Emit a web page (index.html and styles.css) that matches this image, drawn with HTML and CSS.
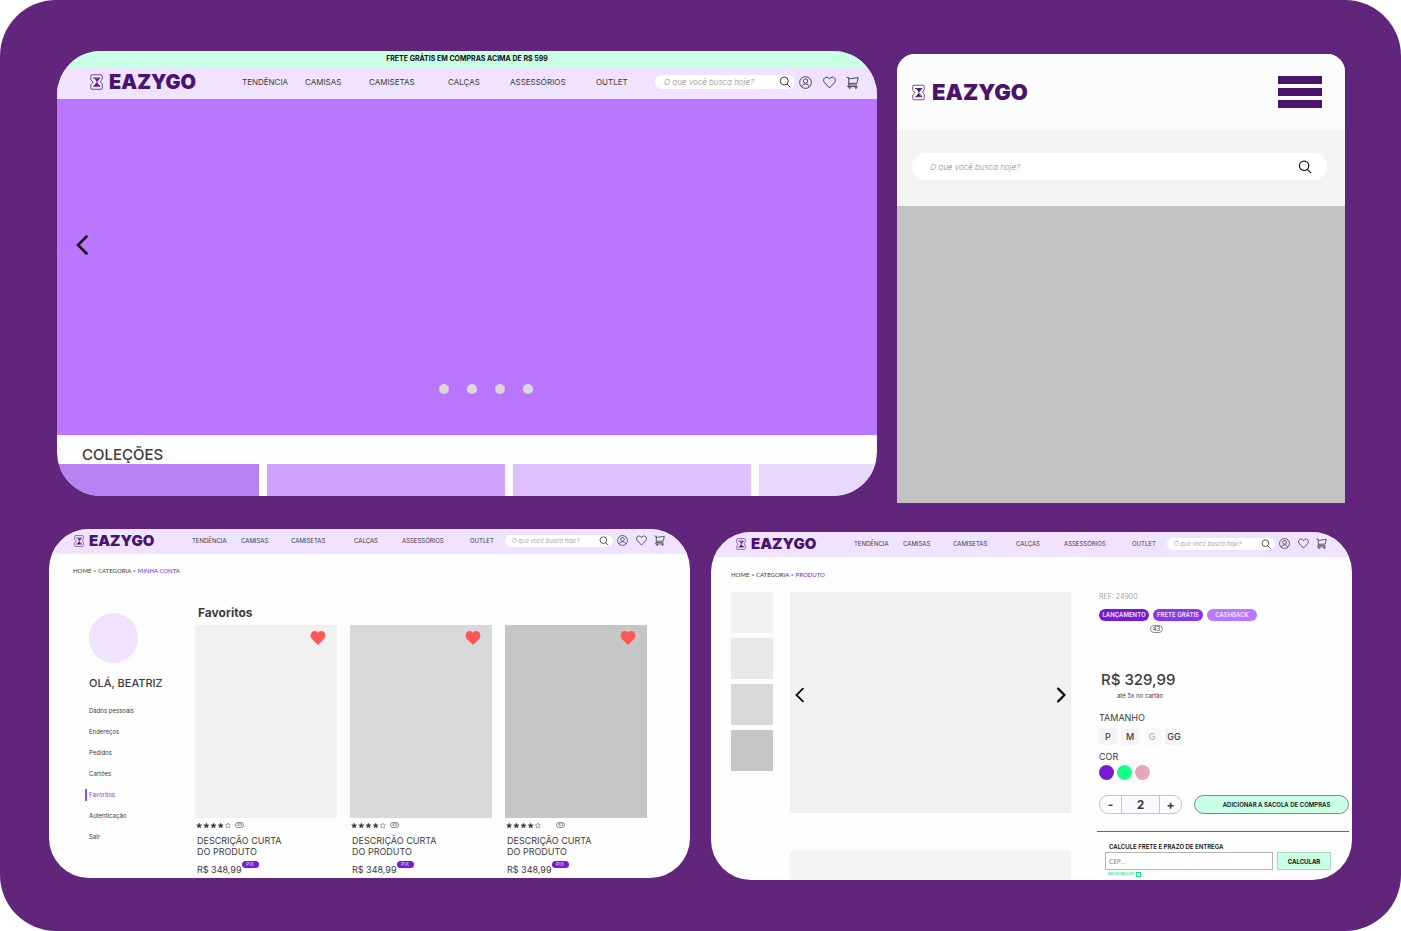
FILE: index.html
```html
<!DOCTYPE html>
<html lang="pt-BR">
<head>
<meta charset="utf-8">
<meta name="viewport" content="width=device-width, initial-scale=1">
<title>EAZYGO</title>
<link rel="stylesheet" href="styles.css">
</head>
<body>
<svg class="sprite" aria-hidden="true">
  <symbol id="mark" viewBox="0 0 26 32">
    <path d="M4 1.500h18a2.500 2.500 0 0 1 2.500 2.500v6L21 15.500l3.500 4.500v8a2.500 2.500 0 0 1-2.500 2.500H4A2.500 2.500 0 0 1 1.500 28v-6.500L6 16 1.500 12V4A2.500 2.500 0 0 1 4 1.500z" fill="none" stroke="currentColor" stroke-width="1.500"/>
    <path d="M6 8h14l-7 8 7 8.500H6" fill="none" stroke="currentColor" stroke-width="1.800"/>
    <path d="M9 9h9l-4.500 6zM12.500 17.500l5.500 6.500H8z" fill="currentColor"/>
  </symbol>
  <symbol id="search" viewBox="0 0 24 24"><circle cx="10.500" cy="10" r="8" fill="none" stroke="currentColor" stroke-width="2"/><path d="M16 16l6.500 6.500" fill="none" stroke="currentColor" stroke-width="2"/></symbol>
  <symbol id="user" viewBox="0 0 24 24"><g fill="none" stroke="currentColor" stroke-width="1.700"><circle cx="12" cy="12" r="10.800"/><circle cx="12" cy="9.500" r="4"/><path d="M5 20c1.500-7 12.500-7 14 0"/></g></symbol>
  <symbol id="heart" viewBox="0 0 24 24"><path d="M12 22L3 12.500C-1.500 7 3 1.500 7.500 2.300 10 2.600 11.500 4.200 12 5.500c.5-1.300 2-2.900 4.500-3.200C21 1.500 25.500 7 21 12.500z" fill="none" stroke="currentColor" stroke-width="1.800"/></symbol>
  <symbol id="heart-full" viewBox="0 0 24 22"><path d="M12 22L2.500 12.500C-1.500 8 .500 0 7 0c2.500 0 4.300 1.300 5 3 .7-1.700 2.500-3 5-3 6.500 0 8.500 8 4.500 12.500z" fill="currentColor"/></symbol>
  <symbol id="cart" viewBox="0 0 24 24"><g fill="none" stroke="currentColor" stroke-width="1.700"><path d="M1 2.500h4v14h15.500M5 5.500L22.500 3 20 13.500H5M5 16.500l-2 3h18"/><circle cx="7" cy="21.500" r="1.500"/><circle cx="18.500" cy="21.500" r="1.500"/></g></symbol>
  <symbol id="prev" viewBox="0 0 12 20"><path d="M10.500 1.500L2 10l8.500 8.500" fill="none" stroke="currentColor" stroke-width="2.500" stroke-linecap="round"/></symbol>
  <symbol id="next" viewBox="0 0 12 20"><path d="M1.500 1.500L10 10l-8.500 8.500" fill="none" stroke="currentColor" stroke-width="3" stroke-linecap="round"/></symbol>
  <symbol id="stars" viewBox="0 0 100 18">
    <g fill="#3c3c3c" stroke="#3c3c3c" stroke-width="1"><path id="st" d="M9 1.500l2.300 5 5.300.6-4 3.600 1.200 5.300L9 13.300 4.200 16l1.200-5.300-4-3.600 5.300-.6z"/><use href="#st" x="20.500"/><use href="#st" x="41"/><use href="#st" x="61.500"/></g>
    <path d="M91 2l2.300 4.500 5 .6-3.700 3.600 1 5L91 13.300 86.400 15.700l1-5-3.700-3.600 5-.6z" fill="none" stroke="#3c3c3c" stroke-width="1.200"/>
  </symbol>
</svg>

<main class="board">
  <div class="row row-top">
    <section class="card home">
      <p class="promo">FRETE GRÁTIS EM COMPRAS ACIMA DE R$ 599</p>
      <header class="bar bar-large">
        <a class="logo" href="#"><svg><use href="#mark"/></svg>EAZYGO</a>
        <a href="#">TENDÊNCIA</a><a href="#">CAMISAS</a><a href="#">CAMISETAS</a><a href="#">CALÇAS</a><a href="#">ASSESSÓRIOS</a><a href="#">OUTLET</a>
        <form class="search"><input type="search" aria-label="Buscar" placeholder="O que você busca hoje?"><button type="button" aria-label="Buscar"><svg><use href="#search"/></svg></button></form>
        <nav class="tools"><a href="#" aria-label="Conta"><svg><use href="#user"/></svg></a><a href="#" aria-label="Favoritos"><svg><use href="#heart"/></svg></a><a href="#" aria-label="Sacola"><svg><use href="#cart"/></svg></a></nav>
      </header>
      <div class="banner">
        <button class="arrow" type="button" aria-label="Anterior"><svg><use href="#prev"/></svg></button>
        <div class="dots"><button type="button" aria-label="Slide 1"></button><button type="button" aria-label="Slide 2"></button><button type="button" aria-label="Slide 3"></button><button type="button" aria-label="Slide 4"></button></div>
      </div>
      <h2 class="collections-title">COLEÇÕES</h2>
      <div class="collections"><div></div><div></div><div></div><div></div></div>
    </section>

    <section class="card mobile">
      <header class="mobile-head">
        <a class="logo" href="#"><svg><use href="#mark"/></svg>EAZYGO</a>
        <button class="menu" type="button" aria-label="Menu"><span></span><span></span><span></span></button>
      </header>
      <div class="mobile-search"><form class="search"><input type="search" aria-label="Buscar" placeholder="O que você busca hoje?"><button type="button" aria-label="Buscar"><svg><use href="#search"/></svg></button></form></div>
      <div class="mobile-hero"></div>
    </section>
  </div>

  <div class="row row-bottom">
    <section class="card account">
      <header class="bar">
        <a class="logo" href="#"><svg><use href="#mark"/></svg>EAZYGO</a>
        <a href="#">TENDÊNCIA</a><a href="#">CAMISAS</a><a href="#">CAMISETAS</a><a href="#">CALÇAS</a><a href="#">ASSESSÓRIOS</a><a href="#">OUTLET</a>
        <form class="search"><input type="search" aria-label="Buscar" placeholder="O que você busca hoje?"><button type="button" aria-label="Buscar"><svg><use href="#search"/></svg></button></form>
        <nav class="tools"><a href="#" aria-label="Conta"><svg><use href="#user"/></svg></a><a href="#" aria-label="Favoritos"><svg><use href="#heart"/></svg></a><a href="#" aria-label="Sacola"><svg><use href="#cart"/></svg></a></nav>
      </header>
      <p class="crumbs">HOME &gt; CATEGORIA &gt; <a href="#">MINHA CONTA</a></p>
      <div class="account-body">
        <aside>
          <div class="avatar"></div>
          <h2 class="hello">OLÁ, BEATRIZ</h2>
          <nav class="side-nav"><a href="#">Dados pessoais</a><a href="#">Endereços</a><a href="#">Pedidos</a><a href="#">Cartões</a><a class="current" href="#">Favoritos</a><a href="#">Autenticação</a><a href="#">Sair</a></nav>
        </aside>
        <div>
          <h1 class="fav-title">Favoritos</h1>
          <div class="fav-grid">
            <article>
              <div class="photo tone-1"><button type="button" aria-label="Remover dos favoritos"><svg><use href="#heart-full"/></svg></button></div>
              <div class="rating"><svg class="stars"><use href="#stars"/></svg><span class="count">43</span></div>
              <h3>DESCRIÇÃO CURTA<br>DO PRODUTO</h3>
              <p class="price">R$ 348,99<span class="pix">PIX</span></p>
            </article>
            <article>
              <div class="photo tone-2"><button type="button" aria-label="Remover dos favoritos"><svg><use href="#heart-full"/></svg></button></div>
              <div class="rating"><svg class="stars"><use href="#stars"/></svg><span class="count">43</span></div>
              <h3>DESCRIÇÃO CURTA<br>DO PRODUTO</h3>
              <p class="price">R$ 348,99<span class="pix">PIX</span></p>
            </article>
            <article>
              <div class="photo tone-3"><button type="button" aria-label="Remover dos favoritos"><svg><use href="#heart-full"/></svg></button></div>
              <div class="rating rating-wide"><svg class="stars"><use href="#stars"/></svg><span class="count">43</span></div>
              <h3>DESCRIÇÃO CURTA<br>DO PRODUTO</h3>
              <p class="price">R$ 348,99<span class="pix">PIX</span></p>
            </article>
          </div>
        </div>
      </div>
    </section>

    <section class="card product">
      <header class="bar">
        <a class="logo" href="#"><svg><use href="#mark"/></svg>EAZYGO</a>
        <a href="#">TENDÊNCIA</a><a href="#">CAMISAS</a><a href="#">CAMISETAS</a><a href="#">CALÇAS</a><a href="#">ASSESSÓRIOS</a><a href="#">OUTLET</a>
        <form class="search"><input type="search" aria-label="Buscar" placeholder="O que você busca hoje?"><button type="button" aria-label="Buscar"><svg><use href="#search"/></svg></button></form>
        <nav class="tools"><a href="#" aria-label="Conta"><svg><use href="#user"/></svg></a><a href="#" aria-label="Favoritos"><svg><use href="#heart"/></svg></a><a href="#" aria-label="Sacola"><svg><use href="#cart"/></svg></a></nav>
      </header>
      <p class="crumbs">HOME &gt; CATEGORIA &gt; <a href="#">PRODUTO</a></p>
      <div class="product-body">
        <div class="thumbs"><div class="tone-1"></div><div class="tone-half"></div><div class="tone-2"></div><div class="tone-3"></div></div>
        <div class="gallery">
          <div class="stage"><button type="button" aria-label="Anterior"><svg><use href="#prev"/></svg></button><button type="button" aria-label="Próxima"><svg><use href="#next"/></svg></button></div>
          <div class="next-block"></div>
        </div>
        <div class="info">
          <p class="ref">REF: 24900</p>
          <div class="tags"><span>LANÇAMENTO</span><span>FRETE GRÁTIS</span><span>CASHBACK</span></div>
          <span class="count">43</span>
          <p class="value">R$ 329,99</p>
          <p class="installments">até 5x no cartão</p>
          <h2 class="label size-label">TAMANHO</h2>
          <div class="sizes"><button type="button">P</button><button type="button">M</button><button type="button" disabled>G</button><button type="button">GG</button></div>
          <h2 class="label color-label">COR</h2>
          <div class="colors"><button class="violet" type="button" aria-label="Roxo"></button><button class="green" type="button" aria-label="Verde"></button><button class="pink" type="button" aria-label="Rosa"></button></div>
          <div class="buy">
            <div class="qty"><button type="button" aria-label="Diminuir">-</button><output>2</output><button type="button" aria-label="Aumentar">+</button></div>
            <button class="add" type="button">ADICIONAR A SACOLA DE COMPRAS</button>
          </div>
          <form class="freight">
            <label class="freight-label" for="cep">CALCULE FRETE E PRAZO DE ENTREGA</label>
            <div class="freight-row"><input id="cep" type="text" placeholder="CEP..."><button type="button">CALCULAR</button></div>
            <label class="unknown">NÃO SEI MEU CEP <input type="checkbox"></label>
          </form>
        </div>
      </div>
    </section>
  </div>
</main>
</body>
</html>
```
FILE: styles.css
```css
* { box-sizing: border-box; }
body { margin: 0; background: #fff; color: #3c3c3c; font-family: Inter, "Open Sans", sans-serif; }
h1, h2, h3, p { margin: 0; font-weight: 400; }
a { color: inherit; text-decoration: none; }
button, input { margin: 0; padding: 0; border: 0; background: none; color: inherit; font: inherit; }
svg { display: block; }
.sprite { position: absolute; width: 0; height: 0; }

.board { min-height: 100vh; padding: 51px 0; border-radius: 56px; background: #61267c; }
.row { display: grid; align-items: start; }
.row-top { grid-template-columns: 820fr 448fr; gap: 20px; padding: 0 56px 0 57px; }
.row-bottom { grid-template-columns: 1fr 1fr; gap: 21px; margin-top: 26px; padding: 0 49px; }
.card { overflow: hidden; background: #fdfdfd; }

/* Header bar */
.bar { display: grid; grid-template-columns: 118fr 49fr 50fr 63fr 48fr 68fr 35fr 108fr 52fr; align-items: center; height: 25px; padding: 0 25px 2px; background: #f0e3ff; font-size: 6px; }
.logo { display: flex; align-items: center; gap: 5px; color: #49136e; font-size: 15px; font-weight: 900; line-height: 1; }
.logo svg { width: 10px; height: 12px; }
.search { display: flex; align-items: center; justify-content: space-between; min-width: 0; height: 12px; padding: 0 4px 0 7px; border-radius: 14px; background: #fff; }
.search input { flex: 1; width: 0; min-width: 0; outline: 0; font-size: 6px; font-style: italic; font-weight: 300; }
.search input::placeholder { color: #8c8c8c; opacity: 1; }
.search svg { width: 10px; height: 10px; }
.tools { display: flex; justify-content: space-between; padding-left: 4px; }
.tools svg { width: 11px; height: 11px; }
.bar-large { grid-template-columns: 152fr 63fr 64fr 79fr 62fr 86fr 59fr 140fr 64fr; height: 32px; padding: 0 18px 2px 33px; font-size: 8px; }
.bar-large .logo { gap: 6px; font-size: 20px; }
.bar-large .logo svg { width: 13px; height: 16px; }
.bar-large .search { height: 14px; padding-left: 9px; }
.bar-large .search input { font-size: 8px; }
.bar-large .search svg { width: 12px; height: 12px; }
.bar-large .tools svg { width: 13px; height: 13px; }

/* Home */
.home { border-radius: 44px; }
.promo { height: 16px; background: #c8ffe5; color: #111; font-size: 7px; font-weight: 700; line-height: 16px; text-align: center; }
.banner { display: flex; flex-direction: column; justify-content: space-between; min-height: 336px; padding: 136px 19px 41px; background: #ba76ff; color: #111; }
.arrow { align-self: flex-start; }
.arrow svg { width: 12px; height: 20px; }
.dots { display: flex; justify-content: center; gap: 18px; padding-left: 37px; }
.dots button { width: 10px; height: 10px; border-radius: 50%; background: #d9d9d9; }
.collections-title { height: 29px; padding: 10px 25px 0; font-size: 15px; font-weight: 500; line-height: 20px; }
.collections { display: grid; grid-template-columns: 202fr 238fr 238fr 118fr; gap: 8px; }
.collections div { height: 32px; background: #b681f0; }
.collections div:nth-child(2) { background: #cfa3ff; }
.collections div:nth-child(3) { background: #dfc1ff; }
.collections div:nth-child(4) { background: #e9d8ff; }

/* Mobile */
.mobile { margin-top: 3px; border-radius: 18px 18px 0 0; }
.mobile-head { display: flex; align-items: center; justify-content: space-between; height: 76px; padding: 0 23px 0 15px; background: #fcfcfc; }
.mobile-head .logo { gap: 7px; font-size: 22px; }
.mobile-head .logo svg { width: 13px; height: 17px; }
.menu { display: grid; gap: 4px; width: 44px; }
.menu span { height: 8px; background: #49136e; }
.mobile-search { padding: 23px 18px 26px 15px; background: #f4f4f4; }
.mobile-search .search { height: 27px; padding: 0 15px 0 18px; color: #111; }
.mobile-search .search input { font-size: 8px; }
.mobile-search .search svg { width: 14px; height: 14px; }
.mobile-hero { height: 297px; background: #c2c2c2; }

/* Account */
.account, .product { border-radius: 40px; }
.crumbs { padding: 13px 24px 0; font-family: Lato, Inter, sans-serif; font-size: 6px; line-height: 8px; }
.crumbs a { color: #761bd1; }
.account-body { display: grid; grid-template-columns: 106px 1fr; margin-top: 30px; padding: 0 43px 0 40px; }
.avatar { width: 49px; height: 50px; margin-top: 8px; border-radius: 50%; background: #f0e3ff; }
.hello { margin-top: 12px; font-size: 11px; font-weight: 500; line-height: 16px; white-space: nowrap; }
.side-nav { display: grid; gap: 13px; margin-top: 16px; font-size: 6px; line-height: 8px; }
.side-nav .current { margin: -2px 0 -2px -4px; padding: 2px; border-left: 2px solid #9747ff; color: #8b35e8; }
.fav-title { padding-left: 3px; font-size: 12px; font-weight: 700; line-height: 16px; }
.fav-grid { display: grid; grid-template-columns: repeat(3, 1fr); gap: 13px; margin-top: 4px; }
.photo { display: flex; align-items: flex-start; justify-content: flex-end; height: 193px; padding: 6px 11px; }
.photo svg { width: 16px; height: 14px; color: #ff5757; }
.tone-1 { background: #f1f1f1; }
.tone-half { background: #e8e8e8; }
.tone-2 { background: #d9d9d9; }
.tone-3 { background: #c6c6c6; }
.rating { display: flex; align-items: center; gap: 4px; height: 8px; margin-top: 3px; padding-left: 1px; }
.rating-wide { gap: 15px; }
.stars { width: 35px; height: 7px; }
.count { display: block; width: 9px; height: 6px; border: 1px solid #8c8c8c; border-radius: 4px; font-size: 4px; line-height: 4px; text-align: center; }
.fav-grid h3 { margin-top: 6px; padding-left: 2px; font-size: 9px; line-height: 11px; }
.price { display: flex; align-items: flex-start; margin-top: 4px; padding-left: 2px; font-size: 9px; line-height: 17px; }
.pix { width: 17px; height: 7px; border-radius: 4px; background: #761bd1; color: #e9d8ff; font-size: 5px; line-height: 7px; text-align: center; }

/* Product */
.product { margin-top: 3px; }
.product .crumbs { padding: 14px 20px 0; }
.product-body { display: grid; grid-template-columns: 42px 1fr 252px; margin-top: 13px; padding: 0 3px 0 20px; }
.thumbs { display: grid; align-content: start; gap: 5px; }
.thumbs div { height: 41px; }
.gallery { display: flex; flex-direction: column; gap: 38px; margin: 0 26px 0 17px; }
.stage { display: flex; justify-content: space-between; align-items: center; height: 221px; padding: 0 5px 15px; background: #f1f1f1; color: #111; }
.stage svg { width: 9px; height: 16px; }
.next-block { flex: 1; background: #f4f4f4; }
.ref { padding-left: 2px; color: #a6a6a6; font-size: 7px; line-height: 10px; }
.tags { display: flex; gap: 4px; margin-top: 7px; padding-left: 2px; }
.tags span { width: 50px; height: 12px; border-radius: 6px; background: #761bd1; color: #f0e3ff; font-size: 6px; font-weight: 600; line-height: 12px; text-align: center; white-space: nowrap; }
.tags span:nth-child(2) { background: #8b35e8; }
.tags span:nth-child(3) { background: #ba76ff; }
.info > .count { width: 13px; height: 8px; margin: 4px 0 0 53px; font-size: 6px; line-height: 6px; }
.value { margin-top: 37px; padding-left: 4px; font-size: 15px; font-weight: 500; line-height: 20px; }
.installments { margin-top: 2px; padding-left: 20px; font-size: 6px; line-height: 8px; }
.label { padding-left: 2px; font-size: 9px; line-height: 10px; }
.size-label { margin-top: 13px; }
.color-label { margin-top: 7px; }
.sizes { display: flex; gap: 4px; margin-top: 5px; padding-left: 2px; }
.sizes button { width: 18px; height: 17px; border-radius: 2px; background: #f4f4f4; font-size: 9px; font-weight: 500; }
.sizes button:disabled { color: #b4b4b4; background: #f9f9f9; }
.colors { display: flex; gap: 3px; margin-top: 3px; padding-left: 2px; }
.colors button { width: 15px; height: 15px; border-radius: 50%; }
.violet { background: #761bd1; }
.green { background: #17ff8b; }
.pink { background: #e4a8b8; }
.buy { display: flex; gap: 12px; margin-top: 15px; padding: 0 0 17px 2px; border-bottom: 1px solid #666; }
.qty { display: grid; grid-template-columns: 21px 1fr 21px; width: 83px; height: 19px; border: 1px solid #c6c6c6; border-radius: 9px; font-weight: 700; font-size: 12px; line-height: 17px; text-align: center; }
.qty output { border: solid #c6c6c6; border-width: 0 1px; background: #faf7ff; }
.add { flex: 1; height: 19px; padding-left: 10px; border: 1px solid #6d9684; border-radius: 10px; background: #c8ffe5; color: #111; font-size: 6px; font-weight: 600; white-space: nowrap; }
.freight { padding: 11px 18px 3px 8px; }
.freight-label { display: block; padding-left: 4px; color: #111; font-size: 6px; font-weight: 600; line-height: 8px; }
.freight-row { display: grid; grid-template-columns: 1fr 54px; gap: 4px; margin-top: 1px; }
.freight-row input { min-width: 0; height: 18px; padding-left: 3px; border: 1px solid #b4b4b4; background: #fff; font-size: 6px; }
.freight-row input::placeholder { color: #777; opacity: 1; }
.freight-row button { border: 1px solid #a5d9c1; background: #c8ffe5; color: #111; font-size: 6px; font-weight: 700; }
.unknown { display: flex; align-items: center; gap: 2px; margin-top: 2px; padding-left: 3px; color: #17e67f; font-size: 3px; font-weight: 600; line-height: 5px; }
.unknown input { appearance: none; width: 5px; height: 5px; border: 1px solid #17e67f; }
```
